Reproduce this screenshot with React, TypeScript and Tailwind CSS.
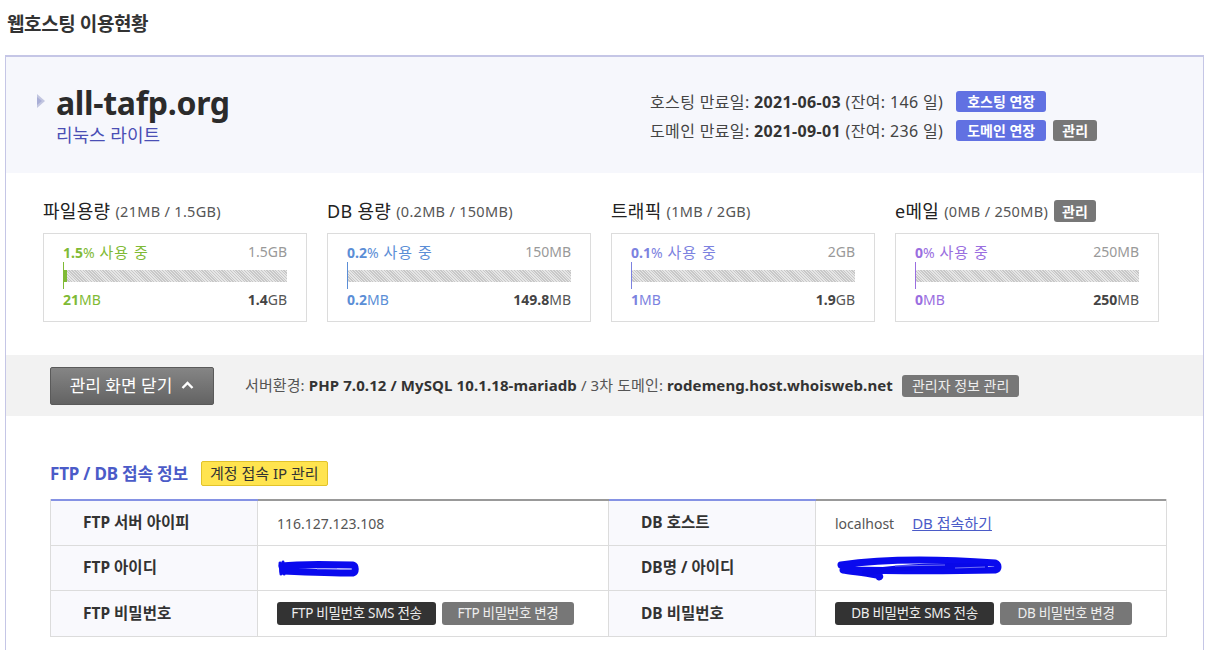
import React from "react";

const font = { fontFamily: '"Noto Sans", "Noto Sans CJK KR", sans-serif' };

type Card = {
  title: string;
  sub: string;
  pct: string;
  total: string;
  used: string;
  usedUnit: string;
  remain: string;
  remainUnit: string;
  color: string;
  fill: number;
  manage?: boolean;
};

const cards: Card[] = [
  { title: "파일용량", sub: "(21MB / 1.5GB)", pct: "1.5", total: "1.5GB", used: "21", usedUnit: "MB", remain: "1.4", remainUnit: "GB", color: "#7fba35", fill: 4 },
  { title: "DB 용량", sub: "(0.2MB / 150MB)", pct: "0.2", total: "150MB", used: "0.2", usedUnit: "MB", remain: "149.8", remainUnit: "MB", color: "#5b8ed6", fill: 0 },
  { title: "트래픽", sub: "(1MB / 2GB)", pct: "0.1", total: "2GB", used: "1", usedUnit: "MB", remain: "1.9", remainUnit: "GB", color: "#7c82e0", fill: 0 },
  { title: "e메일", sub: "(0MB / 250MB)", pct: "0", total: "250MB", used: "0", usedUnit: "MB", remain: "250", remainUnit: "MB", color: "#9a6ee0", fill: 0, manage: true },
];

function UsageCard({ c }: { c: Card }) {
  return (
    <div className="w-[264px] shrink-0">
      <div className="h-[22px] flex items-center">
        <span className="text-[18px] text-[#222] leading-[22px] tracking-[0.3px]">{c.title}</span>
        <span className="text-[14.5px] text-[#555] ml-[5px] leading-[22px] tracking-[0.3px]">{c.sub}</span>
        {c.manage && (
          <span className="ml-[6px] h-[22px] px-[8px] rounded-[3px] bg-[#777] text-white text-[14px] font-bold flex items-center">관리</span>
        )}
      </div>
      <div className="mt-[11px] border border-[#dcdcdc] h-[89px] px-[19px] pt-[8px]">
        <div className="flex justify-between h-[20px] items-center text-[14px] leading-[20px]">
          <span style={{ color: c.color }}>
            <b className="font-bold">{c.pct}</b>%<span className="text-[15px] tracking-[1px]"> 사용 중</span>
          </span>
          <span className="text-[#999]">{c.total}</span>
        </div>
        <div className="relative h-[28px] flex items-center">
          <div className="w-full h-[12px] bg-[repeating-linear-gradient(45deg,#c8c8c8_0px,#c8c8c8_1px,#e6e6e6_1px,#e6e6e6_2px)] relative">
            {c.fill > 0 && (
              <div className="absolute left-0 top-0 h-full" style={{ width: c.fill, background: c.color }} />
            )}
          </div>
          <div className="absolute left-0 top-0 w-px h-[27px]" style={{ background: c.color }} />
        </div>
        <div className="flex justify-between h-[20px] items-center text-[14px] leading-[20px]">
          <span style={{ color: c.color }}>
            <b className="font-bold">{c.used}</b>
            {c.usedUnit}
          </span>
          <span className="text-[#555]">
            <b className="font-bold text-[#444]">{c.remain}</b>
            {c.remainUnit}
          </span>
        </div>
      </div>
    </div>
  );
}

function Scribble({ w }: { w: number }) {
  if (w < 100) {
    return (
      <svg width="82" height="22" viewBox="0 0 82 22">
        <path d="M3 6 L4 17 M6 5 L7 17" stroke="#1010f0" strokeWidth="3" strokeLinecap="round" />
        <path d="M5 9 C20 7 40 7 76 8 C79 9 79 15 76 16 C55 16 30 15 6 14" stroke="#0a0aee" strokeWidth="7" fill="none" strokeLinecap="round" strokeLinejoin="round" />
        <path d="M40 12 L60 12" stroke="#6a6af5" strokeWidth="1" />
      </svg>
    );
  }
  return (
    <svg width="168" height="26" viewBox="0 0 168 26">
      <path d="M6 10 C40 5 90 3 160 8 C164 10 164 14 160 15 C120 16 60 16 8 15 C20 17 50 20 44 22" stroke="#0a0aee" strokeWidth="7" fill="none" strokeLinecap="round" strokeLinejoin="round" />
      <path d="M30 18 C60 12 100 10 150 12" stroke="#0808e8" strokeWidth="6" fill="none" strokeLinecap="round" />
      <path d="M60 11 L110 10 M120 13 L150 12" stroke="#7070f5" strokeWidth="1" />
    </svg>
  );
}

function Th({ children }: { children: React.ReactNode }) {
  return (
    <div className="w-[207px] shrink-0 bg-[#f9f9fd] border-r border-[#dcdcdc] pl-[32px] flex items-center text-[15.5px] font-bold text-[#333]">
      {children}
    </div>
  );
}

function Td({ children, last }: { children: React.ReactNode; last?: boolean }) {
  return (
    <div className={`${last ? "w-[352px]" : "w-[351px] border-r border-[#dcdcdc]"} shrink-0 pl-[19px] flex items-center text-[14px] text-[#555]`}>
      {children}
    </div>
  );
}

function DarkBtn({ children }: { children: React.ReactNode }) {
  return <span className="h-[23px] w-[159px] rounded-[3px] bg-[#333] text-[#eee] text-[13.5px] flex items-center justify-center tracking-[-0.3px]">{children}</span>;
}
function GrayBtn({ children }: { children: React.ReactNode }) {
  return <span className="h-[23px] w-[132px] rounded-[3px] bg-[#777] text-[#eee] text-[13.5px] flex items-center justify-center tracking-[-0.3px]">{children}</span>;
}

export default function App() {
  return (
    <div className="w-[1208px] h-[650px] overflow-hidden bg-white" style={font}>
      <div className="h-[55px] pl-[7px] pt-[10px] text-[19px] font-bold text-[#333] tracking-[-0.4px] leading-[28px]">웹호스팅 이용현황</div>
      <div className="ml-[5px] w-[1199px] h-[600px] border-t-2 border-l border-r border-[#c5c6e6]">
        {/* header */}
        <div className="h-[116px] bg-[#f6f7fc] flex">
          <div className="w-[644px] shrink-0 pl-[30px] pt-[28px]">
            <div className="flex items-center h-[36px]">
              <svg width="10" height="14" viewBox="0 0 10 14" className="mr-[10px] mt-[-4px]">
                <path d="M1 0 L9 7 L1 14 Z" fill="#c2c6e0" />
                <path d="M1 3 L6 7 L1 11 Z" fill="#a9aed6" />
              </svg>
              <span className="text-[32px] font-bold text-[#2b2b2b] leading-[36px] tracking-[-0.3px]">all-tafp.org</span>
            </div>
            <div className="ml-[20px] mt-[3px] text-[18px] text-[#4a4fb5] leading-[22px]">리눅스 라이트</div>
          </div>
          <div className="pt-[34px] flex flex-col gap-[8px]">
            <div className="flex items-center h-[21px] text-[16px] text-[#444]">
              <span className="tracking-[0.35px]">
                호스팅 만료일: <b className="font-bold text-[#333]">2021-06-03</b> (잔여: 146 일)
              </span>
              <span className="ml-[13px] h-[21px] w-[90px] rounded-[3px] bg-[#6171e2] text-white text-[14px] font-bold flex items-center justify-center">호스팅 연장</span>
            </div>
            <div className="flex items-center h-[21px] text-[16px] text-[#444]">
              <span className="tracking-[0.35px]">
                도메인 만료일: <b className="font-bold text-[#333]">2021-09-01</b> (잔여: 236 일)
              </span>
              <span className="ml-[13px] h-[21px] w-[90px] rounded-[3px] bg-[#6171e2] text-white text-[14px] font-bold flex items-center justify-center">도메인 연장</span>
              <span className="ml-[7px] h-[21px] w-[44px] rounded-[3px] bg-[#777] text-white text-[14px] font-bold flex items-center justify-center">관리</span>
            </div>
          </div>
        </div>
        {/* cards */}
        <div className="h-[182px] pl-[37px] pt-[27px] flex gap-[20px]">
          {cards.map((c) => (
            <UsageCard key={c.title} c={c} />
          ))}
        </div>
        {/* gray band */}
        <div className="h-[61px] bg-[#f2f2f2] flex items-center pl-[44px]">
          <span className="h-[38px] w-[164px] rounded-[2px] border border-[#5a5a5a] bg-[linear-gradient(#858585,#636363)] text-white text-[17px] flex items-center justify-center gap-[9px]">
            관리 화면 닫기
            <svg width="13" height="9" viewBox="0 0 13 9">
              <path d="M1.5 7 L6.5 2 L11.5 7" stroke="white" strokeWidth="2.4" fill="none" />
            </svg>
          </span>
          <span className="ml-[31px] text-[15px] text-[#555] tracking-[0.1px]">
            서버환경: <b className="font-bold text-[#333]">PHP 7.0.12 / MySQL 10.1.18-mariadb</b> / 3차 도메인: <b className="font-bold text-[#333]">rodemeng.host.whoisweb.net</b>
          </span>
          <span className="ml-[9px] h-[22px] px-[10px] rounded-[3px] bg-[#777] text-[#eee] text-[14px] flex items-center">관리자 정보 관리</span>
        </div>
        {/* FTP/DB */}
        <div className="pl-[44px] pt-[45px]">
          <div className="flex items-center h-[25px]">
            <span className="text-[17px] font-bold text-[#4b5bc8] tracking-[-0.2px]">FTP / DB 접속 정보</span>
            <span className="ml-[13px] h-[25px] px-[8px] rounded-[2px] border border-[#e2c32a] bg-[#ffe44f] text-[#333] text-[15px] flex items-center">계정 접속 IP 관리</span>
          </div>
          <div className="mt-[13px] w-[1117px] border-l border-b border-r border-[#dcdcdc]">
            <div className="flex h-[2px]">
              <div className="w-[207px] bg-[#8592e4]" />
              <div className="w-[351px] bg-[#999]" />
              <div className="w-[207px] bg-[#8592e4]" />
              <div className="flex-1 bg-[#999]" />
            </div>
            <div className="flex h-[45px] border-b border-[#dcdcdc]">
              <Th>FTP 서버 아이피</Th>
              <Td>116.127.123.108</Td>
              <Th>DB 호스트</Th>
              <Td last>
                localhost
                <a className="ml-[18px] text-[#4b5bc8] underline text-[15px]">DB 접속하기</a>
              </Td>
            </div>
            <div className="flex h-[45px] border-b border-[#dcdcdc]">
              <Th>FTP 아이디</Th>
              <Td>
                <Scribble w={80} />
              </Td>
              <Th>DB명 / 아이디</Th>
              <Td last>
                <Scribble w={168} />
              </Td>
            </div>
            <div className="flex h-[45px]">
              <Th>FTP 비밀번호</Th>
              <Td>
                <div className="flex gap-[6px]">
                  <DarkBtn>FTP 비밀번호 SMS 전송</DarkBtn>
                  <GrayBtn>FTP 비밀번호 변경</GrayBtn>
                </div>
              </Td>
              <Th>DB 비밀번호</Th>
              <Td last>
                <div className="flex gap-[6px]">
                  <DarkBtn>DB 비밀번호 SMS 전송</DarkBtn>
                  <GrayBtn>DB 비밀번호 변경</GrayBtn>
                </div>
              </Td>
            </div>
          </div>
        </div>
      </div>
    </div>
  );
}
